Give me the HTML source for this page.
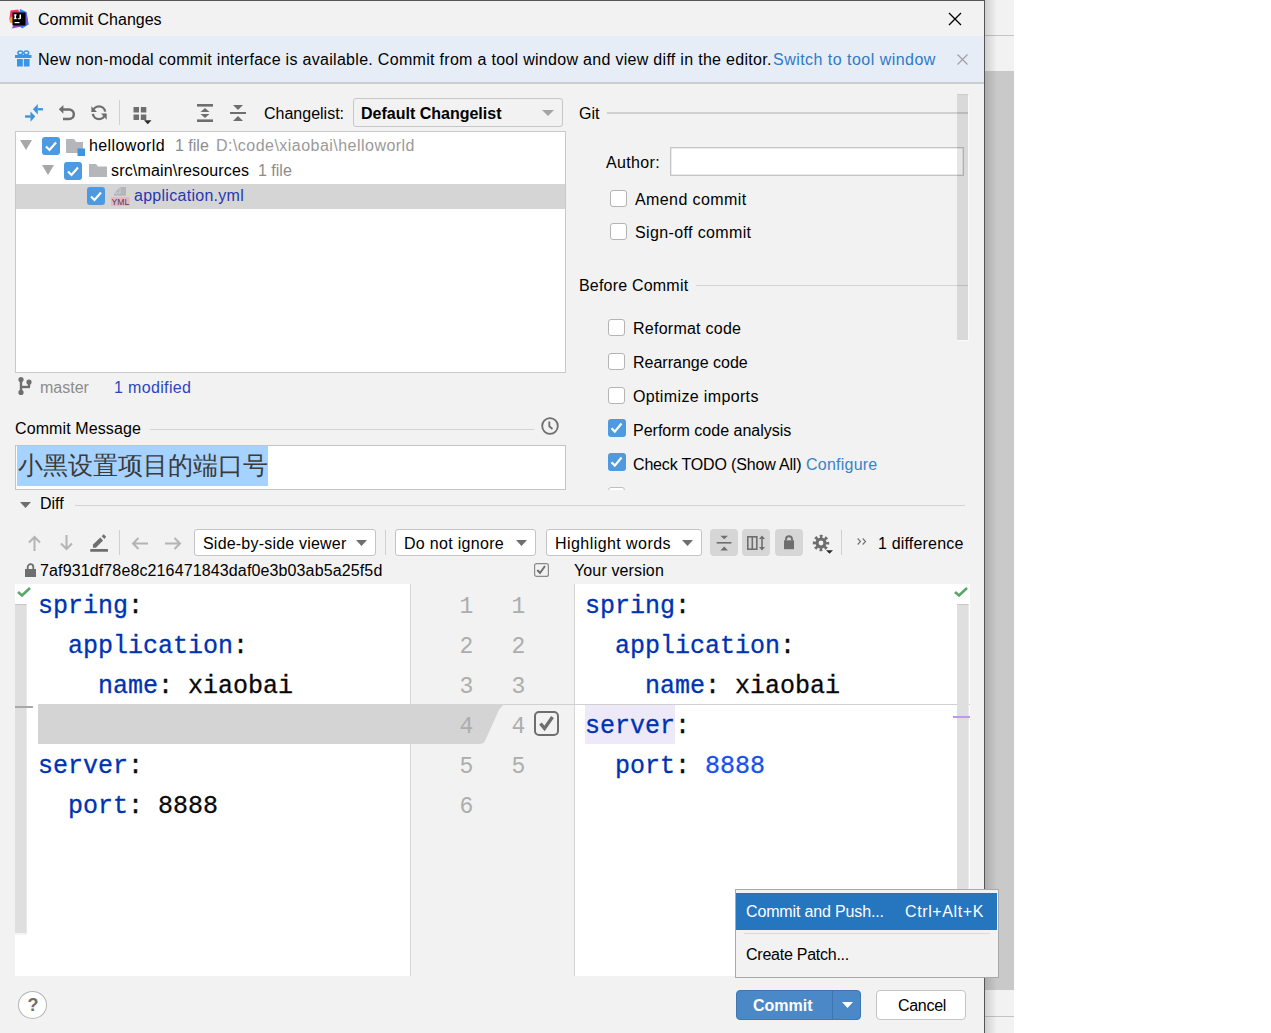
<!DOCTYPE html>
<html><head><meta charset="utf-8">
<style>
*{box-sizing:border-box;margin:0;padding:0}
html,body{width:1271px;height:1033px;overflow:hidden;background:#fff;font-family:"Liberation Sans",sans-serif;color:#000}
.a{position:absolute}
.t{position:absolute;white-space:nowrap;font-size:16px;line-height:20px}
.mono{font-family:"Liberation Mono",monospace}
.cb{position:absolute;width:18px;height:18px;border-radius:3px;background:#4e9ae0}
.cb svg{position:absolute;left:0;top:0}
svg{display:block}
.ucb{position:absolute;width:18px;height:18px;border-radius:3px;background:#fff;border:1px solid #b4b4b4}
.c{position:absolute;white-space:pre;font-family:"Liberation Mono",monospace;font-size:25px;line-height:40px;-webkit-text-stroke:.3px}
.g{position:absolute;white-space:pre;font-family:"Liberation Mono",monospace;font-size:23px;line-height:40px;color:#adadad}
.hr{position:absolute;height:1px;background:#d3d3d3}
</style></head><body>
<!-- outside strip -->
<div class="a" style="left:985px;top:0;width:29px;height:1033px;background:#f2f2f2"></div>
<div class="a" style="left:985px;top:35px;width:29px;height:1px;background:#c4c4c4"></div>
<div class="a" style="left:985px;top:71px;width:29px;height:919px;background:#c9c9c9"></div>
<div class="a" style="left:985px;top:1016px;width:29px;height:1px;background:#c4c4c4"></div>
<div class="a" style="left:985px;top:0;width:12px;height:1033px;background:linear-gradient(90deg,rgba(0,0,0,.14),rgba(0,0,0,0))"></div>

<!-- dialog -->
<div class="a" style="left:0;top:0;width:985px;height:1033px;background:#f2f2f2;border-top:1px solid #555;border-right:1px solid #555"></div>

<!-- title -->
<div class="a" style="left:9px;top:9px;width:20px;height:20px"><svg width="20" height="20" viewBox="0 0 20 20"><path d="M1.5 1.5 L9 0.5 L11 4 L5 13 L0.5 9.5 Z" fill="#ea3568"/><path d="M11 0 L17.5 3 L19.5 15.5 L13 19.5 L8 14 Z" fill="#2e7ef0"/><path d="M17.5 3 L19.5 15.5 L15 17Z" fill="#6a5fe0"/><path d="M0 9 L4.5 7 L4 14.5 L1 13.5Z" fill="#f0923a"/><path d="M2.5 19.5 L6 14 L13 17.5Z" fill="#9345d4"/><rect x="3.5" y="3.5" width="13" height="13" fill="#000"/><g fill="#fff"><rect x="5.5" y="5.5" width="1.5" height="4.5"/><rect x="4.8" y="5.5" width="2.9" height="1"/><rect x="4.8" y="9.2" width="2.9" height="1"/><path d="M10.5 5.5 H12 V9 Q12 10.2 10.5 10.2 H8.8 V9.2 H10.5Z"/><rect x="5.5" y="13" width="5" height="1.2"/></g></svg></div>
<div class="t" style="left:38px;top:10px;font-size:16px">Commit Changes</div>
<div class="a" style="left:948px;top:12px;width:14px;height:14px"><svg width="14" height="14"><path d="M1 1 L13 13 M13 1 L1 13" stroke="#000" stroke-width="1.3"/></svg></div>

<!-- banner -->
<div class="a" style="left:0;top:36px;width:984px;height:46px;background:#e6edf7"></div>
<div class="a" style="left:0;top:82px;width:984px;height:2px;background:#cbcdd0"></div>
<div class="a" style="left:15px;top:50px;width:17px;height:17px"><svg width="17" height="17"><g fill="#3d94e0"><rect x="0" y="5" width="16.5" height="3"/><rect x="2" y="9" width="5.8" height="7.5"/><rect x="8.8" y="9" width="5.8" height="7.5"/></g><g stroke="#3d94e0" stroke-width="1.5" fill="none"><ellipse cx="5.3" cy="2.8" rx="2.4" ry="1.9"/><ellipse cx="11.3" cy="2.8" rx="2.4" ry="1.9"/></g></svg></div>
<div class="t" style="left:38px;top:50px;font-size:16px;letter-spacing:.3px">New non-modal commit interface is available. Commit from a tool window and view diff in the editor.</div>
<div class="t" style="left:773px;top:50px;font-size:16px;color:#2e7bc7;letter-spacing:.47px">Switch to tool window</div>
<div class="a" style="left:957px;top:54px;width:11px;height:11px"><svg width="11" height="11"><path d="M.5 .5 L10.5 10.5 M10.5 .5 L.5 10.5" stroke="#a0a0a0" stroke-width="1.2"/></svg></div>


<!-- toolbar -->
<div class="a" style="left:25px;top:104px;width:18px;height:18px"><svg width="18" height="18" viewBox="0 0 18 18"><g fill="#3d94e0"><path d="M7.9 5.2 L12.8 0 L12.8 10.4Z"/><rect x="12.5" y="4.1" width="5.5" height="2.3"/><path d="M10.3 12.6 L5.5 7.6 L5.5 17.8Z"/><rect x="0" y="11.3" width="5.8" height="2.4"/></g></svg></div>
<div class="a" style="left:58px;top:104px;width:18px;height:18px"><svg width="18" height="18" viewBox="0 0 18 18"><path d="M4.5 5.4 H11 A4.85 4.85 0 0 1 11 15.1 H5" stroke="#6e6e6e" stroke-width="2.5" fill="none"/><path d="M0.8 5.3 L5.4 1 L5.4 9.7Z" fill="#6e6e6e"/></svg></div>
<div class="a" style="left:90px;top:104px;width:18px;height:18px"><svg width="18" height="18" viewBox="0 0 18 18"><g stroke="#6e6e6e" stroke-width="2.4" fill="none"><path d="M2.8 7.6 A6.3 6.3 0 0 1 15.2 7.6"/><path d="M15.2 9.9 A6.3 6.3 0 0 1 2.8 9.9"/></g><g fill="#6e6e6e"><path d="M1.4 2.2 V7.9 H7Z"/><path d="M16.7 9.6 V15.7 L11 9.6Z"/></g></svg></div>
<div class="a" style="left:119px;top:100px;width:1px;height:25px;background:#d0d0d0"></div>
<div class="a" style="left:133px;top:107px;width:19px;height:18px"><svg width="19" height="18"><g fill="#6e6e6e"><rect x="0.5" y="0" width="5.5" height="5.5"/><rect x="7.8" y="0" width="5.5" height="5.5"/><rect x="0.5" y="7.5" width="5.5" height="5.5"/><rect x="7.8" y="7.5" width="5.5" height="5.5"/></g><path d="M11 13.3 H18.5 L14.75 17.2Z" fill="#2b2b2b"/></svg></div>
<div class="a" style="left:197px;top:104px;width:16px;height:18px"><svg width="16" height="18"><g fill="#6e6e6e"><rect x="0" y="0" width="16" height="2.6"/><rect x="0" y="15.4" width="16" height="2.6"/><path d="M3.5 8 L8 4 L12.5 8Z"/><path d="M3.5 10 L8 14 L12.5 10Z"/></g></svg></div>
<div class="a" style="left:230px;top:105px;width:16px;height:16px"><svg width="16" height="16"><g fill="#6e6e6e"><rect x="0" y="7" width="16" height="2"/><path d="M3 0 H13 L8 5Z"/><path d="M3 16 H13 L8 11Z"/></g></svg></div>
<div class="t" style="left:264px;top:104px">Changelist:</div>
<div class="a" style="left:353px;top:98px;width:210px;height:29px;border:1px solid #c6c6c6;border-radius:3px;background:#f2f2f2"></div>
<div class="t" style="left:361px;top:104px;font-weight:bold">Default Changelist</div>
<div class="a" style="left:542px;top:110px;width:12px;height:6px"><svg width="12" height="6"><path d="M0 0 H12 L6 6Z" fill="#a4a4a4"/></svg></div>

<!-- tree -->
<div class="a" style="left:15px;top:131px;width:551px;height:242px;background:#fff;border:1px solid #c9c9c9"></div>
<div class="a" style="left:16px;top:184px;width:549px;height:25px;background:#d5d5d5"></div>
<div class="a" style="left:20px;top:140px;width:12px;height:10px"><svg width="12" height="10"><path d="M0 0 H12 L6 10Z" fill="#a8a8a8"/></svg></div>
<div class="a" style="left:42px;top:165px;width:12px;height:10px"><svg width="12" height="10"><path d="M0 0 H12 L6 10Z" fill="#a8a8a8"/></svg></div>
<div class="cb" style="left:42px;top:137px;width:18px;height:18px"><svg width="18" height="18"><path d="M4 9.5 L7.5 13 L14 5.5" stroke="#fff" stroke-width="2.2" fill="none"/></svg></div>
<div class="cb" style="left:64px;top:162px;width:18px;height:18px"><svg width="18" height="18"><path d="M4 9.5 L7.5 13 L14 5.5" stroke="#fff" stroke-width="2.2" fill="none"/></svg></div>
<div class="cb" style="left:87px;top:187px;width:18px;height:18px"><svg width="18" height="18"><path d="M4 9.5 L7.5 13 L14 5.5" stroke="#fff" stroke-width="2.2" fill="none"/></svg></div>
<div class="a" style="left:66px;top:139px;width:20px;height:17px"><svg width="20" height="17"><path d="M0 0 H8 L10 3 H17 V14 H0Z" fill="#b4b6b9"/><rect x="11.5" y="9.5" width="7.5" height="7.5" fill="#3d94e0"/></svg></div>
<div class="a" style="left:89px;top:164px;width:18px;height:13px"><svg width="18" height="13"><path d="M0 0 H7 L9 2.5 H18 V13 H0Z" fill="#b4b6b9"/></svg></div>
<div class="a" style="left:111px;top:187px;width:20px;height:19px"><svg width="20" height="19"><path d="M3 8.7 V6.5 L9 0 H15 V8.7Z" fill="#b4b6b9"/><path d="M9 0 V6 H3.5" stroke="#d4d4d4" stroke-width=".8" fill="none"/><rect x="0" y="10" width="18.7" height="8.8" fill="#e8b4c8"/><text x="0.6" y="18.2" font-size="9.3" font-family="Liberation Sans" fill="#454545" textLength="17.6" lengthAdjust="spacingAndGlyphs">YML</text></svg></div>
<div class="t" style="left:89px;top:136px;letter-spacing:.4px">helloworld</div>
<div class="t" style="left:175px;top:136px;color:#8c8c8c">1 file</div>
<div class="t" style="left:216px;top:136px;color:#9a9a9a;letter-spacing:.47px">D:\code\xiaobai\helloworld</div>
<div class="t" style="left:111px;top:161px;letter-spacing:.17px">src\main\resources</div>
<div class="t" style="left:258px;top:161px;color:#8c8c8c">1 file</div>
<div class="t" style="left:134px;top:186px;color:#2837b0;letter-spacing:.28px">application.yml</div>

<!-- status -->
<div class="a" style="left:18px;top:377px;width:14px;height:18px"><svg width="14" height="18"><g fill="#6e6e6e"><circle cx="3" cy="2.6" r="2.6"/><circle cx="3" cy="15.4" r="2.6"/><circle cx="11" cy="5" r="2.6"/><rect x="1.8" y="2" width="2.4" height="14"/><rect x="9.8" y="5" width="2.4" height="5"/><rect x="3" y="8.8" width="9" height="2.4"/></g></svg></div>
<div class="t" style="left:40px;top:378px;color:#8c8c8c">master</div>
<div class="t" style="left:114px;top:378px;color:#2a46c0;letter-spacing:.35px">1 modified</div>

<!-- commit message -->
<div class="t" style="left:15px;top:419px;letter-spacing:.1px">Commit Message</div>
<div class="hr" style="left:150px;top:429px;width:384px"></div>
<div class="a" style="left:541px;top:417px;width:18px;height:18px"><svg width="18" height="18"><circle cx="9" cy="9" r="7.8" stroke="#6e6e6e" stroke-width="1.8" fill="none"/><path d="M8.3 4.5 V9.3 L11.5 12" stroke="#6e6e6e" stroke-width="1.8" fill="none"/></svg></div>
<div class="a" style="left:15px;top:445px;width:551px;height:45px;background:#fff;border:1px solid #c4c4c4"></div>
<div class="a" style="left:17px;top:446px;width:251px;height:40px;background:#a6d2ff"></div>
<div class="t" style="left:18px;top:451px;font-family:'Liberation Serif',serif;font-size:24.7px;line-height:30px;color:#3a3a3a">小黑设置项目的端口号</div>

<!-- diff header -->
<div class="a" style="left:20px;top:502px;width:11px;height:6px"><svg width="11" height="6"><path d="M0 0 H11 L5.5 6Z" fill="#6e6e6e"/></svg></div>
<div class="t" style="left:40px;top:494px">Diff</div>
<div class="hr" style="left:75px;top:505px;width:890px"></div>


<!-- right panel -->
<div class="t" style="left:579px;top:104px">Git</div>
<div class="a" style="left:607px;top:112px;width:362px;height:2px;background:#d0d0d0"></div>
<div class="t" style="left:606px;top:153px;letter-spacing:.35px">Author:</div>
<div class="a" style="left:670px;top:147px;width:294px;height:29px;background:#fff;border:1px solid #c4c4c4;box-shadow:inset 0 0 0 .5px #d8d8d8"></div>
<div class="ucb" style="left:610px;top:190px;width:17px;height:17px"></div>
<div class="t" style="left:635px;top:190px;letter-spacing:.4px">Amend commit</div>
<div class="ucb" style="left:610px;top:223px;width:17px;height:17px"></div>
<div class="t" style="left:635px;top:223px;letter-spacing:.37px">Sign-off commit</div>
<div class="t" style="left:579px;top:276px;letter-spacing:.2px">Before Commit</div>
<div class="hr" style="left:696px;top:285px;width:273px"></div>
<div class="ucb" style="left:608px;top:319px;width:17px;height:17px"></div>
<div class="t" style="left:633px;top:319px;letter-spacing:.25px">Reformat code</div>
<div class="ucb" style="left:608px;top:353px;width:17px;height:17px"></div>
<div class="t" style="left:633px;top:353px">Rearrange code</div>
<div class="ucb" style="left:608px;top:387px;width:17px;height:17px"></div>
<div class="t" style="left:633px;top:387px;letter-spacing:.36px">Optimize imports</div>
<div class="cb" style="left:608px;top:419px"><svg width="17" height="17"><path d="M3.5 9.2 L6.8 12.6 L13.5 4.5" stroke="#fff" stroke-width="2.2" fill="none"/></svg></div>
<div class="t" style="left:633px;top:421px">Perform code analysis</div>
<div class="cb" style="left:608px;top:453px"><svg width="17" height="17"><path d="M3.5 9.2 L6.8 12.6 L13.5 4.5" stroke="#fff" stroke-width="2.2" fill="none"/></svg></div>
<div class="t" style="left:633px;top:455px;letter-spacing:-.17px">Check TODO (Show All)</div>
<div class="t" style="left:806px;top:455px;color:#3b83c7;letter-spacing:.23px">Configure</div>
<div class="a" style="left:608px;top:487px;width:17px;height:3px;overflow:hidden"><div style="width:17px;height:17px;border:1px solid #c0c0c0;border-radius:3px;background:#fff"></div></div>
<div class="a" style="left:957px;top:94px;width:12px;height:247px;background:rgba(0,0,0,.1);border-right:1px solid #fafafa;border-bottom:1px solid #fafafa;border-top:1px solid rgba(0,0,0,.05)"></div>

<!-- diff toolbar -->
<div class="a" style="left:28px;top:535px;width:13px;height:16px"><svg width="13" height="16"><path d="M6.5 16 V2 M1 7.5 L6.5 2 L12 7.5" stroke="#b4b4b4" stroke-width="2" fill="none"/></svg></div>
<div class="a" style="left:60px;top:535px;width:13px;height:16px"><svg width="13" height="16"><path d="M6.5 0 V14 M1 8.5 L6.5 14 L12 8.5" stroke="#b4b4b4" stroke-width="2" fill="none"/></svg></div>
<div class="a" style="left:90px;top:534px;width:18px;height:18px"><svg width="18" height="18"><g fill="#6e6e6e"><path d="M2.9 13.7 L3.05 10.5 L10.3 3.5 L13.05 6.4 L5.9 13.7Z"/><path d="M11.7 2.2 L13.7 0.15 L16.1 2.7 L14.4 4.9Z"/><rect x="0.2" y="15.1" width="17.8" height="2.7" rx=".6"/></g></svg></div>
<div class="a" style="left:119px;top:530px;width:1px;height:25px;background:#d0d0d0"></div>
<div class="a" style="left:131px;top:537px;width:17px;height:13px"><svg width="17" height="13"><path d="M17 6.5 H2 M7.5 1 L2 6.5 L7.5 12" stroke="#b4b4b4" stroke-width="2" fill="none"/></svg></div>
<div class="a" style="left:165px;top:537px;width:17px;height:13px"><svg width="17" height="13"><path d="M0 6.5 H15 M9.5 1 L15 6.5 L9.5 12" stroke="#b4b4b4" stroke-width="2" fill="none"/></svg></div>
<div class="a" style="left:194px;top:529px;width:182px;height:27px;background:#fff;border:1px solid #c4c4c4;border-radius:3px"></div>
<div class="t" style="left:203px;top:534px;letter-spacing:.2px">Side-by-side viewer</div>
<div class="a" style="left:356px;top:540px;width:11px;height:6px"><svg width="11" height="6"><path d="M0 0 H11 L5.5 6Z" fill="#6e6e6e"/></svg></div>
<div class="a" style="left:385px;top:530px;width:1px;height:25px;background:#d0d0d0"></div>
<div class="a" style="left:395px;top:529px;width:141px;height:27px;background:#fff;border:1px solid #c4c4c4;border-radius:3px"></div>
<div class="t" style="left:404px;top:534px;letter-spacing:.3px">Do not ignore</div>
<div class="a" style="left:516px;top:540px;width:11px;height:6px"><svg width="11" height="6"><path d="M0 0 H11 L5.5 6Z" fill="#6e6e6e"/></svg></div>
<div class="a" style="left:546px;top:529px;width:156px;height:27px;background:#fff;border:1px solid #c4c4c4;border-radius:3px"></div>
<div class="t" style="left:555px;top:534px;letter-spacing:.44px">Highlight words</div>
<div class="a" style="left:682px;top:540px;width:11px;height:6px"><svg width="11" height="6"><path d="M0 0 H11 L5.5 6Z" fill="#6e6e6e"/></svg></div>
<div class="a" style="left:710px;top:529px;width:28px;height:27px;background:#d6d6d6;border-radius:4px"></div>
<div class="a" style="left:742px;top:529px;width:28px;height:27px;background:#d6d6d6;border-radius:4px"></div>
<div class="a" style="left:775px;top:529px;width:28px;height:27px;background:#d6d6d6;border-radius:4px"></div>
<div class="a" style="left:716px;top:535px;width:16px;height:16px"><svg width="16" height="16"><g fill="#6e6e6e"><rect x="0.7" y="7" width="14.7" height="1.6"/><path d="M4.4 0.8 H12 L8.2 4.3Z"/><path d="M4.4 15.6 H12 L8.2 11.6Z"/></g></svg></div>
<div class="a" style="left:747px;top:535px;width:19px;height:16px"><svg width="19" height="16"><g fill="none" stroke="#6e6e6e" stroke-width="1.6"><rect x=".8" y="1.8" width="9" height="12.4"/><path d="M5.3 1.8 V14.2"/><path d="M15 2 V14"/></g><path d="M12 4 L15 .5 L18 4Z M12 12 L15 15.5 L18 12Z" fill="#6e6e6e"/></svg></div>
<div class="a" style="left:784px;top:535px;width:10px;height:15px"><svg width="10" height="15"><path d="M2 5.5 V4.2 A3 3 0 0 1 8 4.2 V5.5" stroke="#6e6e6e" stroke-width="1.9" fill="none"/><rect x="0" y="5.3" width="10" height="8.9" fill="#6e6e6e"/></svg></div>
<div class="a" style="left:812px;top:534px;width:22px;height:21px"><svg width="22" height="21"><circle cx="9" cy="9" r="5.6" fill="#6e6e6e"/><circle cx="9" cy="9" r="6.6" stroke="#6e6e6e" stroke-width="3.2" stroke-dasharray="2.7 2.48" stroke-dashoffset="1.35" fill="none"/><circle cx="9" cy="9" r="2.4" fill="#f2f2f2"/><path d="M14 16.3 H21 L17.5 19.8Z" fill="#2b2b2b"/></svg></div>
<div class="a" style="left:841px;top:530px;width:1px;height:25px;background:#d0d0d0"></div>
<div class="a" style="left:857px;top:538px;width:10px;height:7px"><svg width="10" height="7"><path d="M.7 .5 L3.5 3.5 L.7 6.5 M5.7 .5 L8.5 3.5 L5.7 6.5" stroke="#6e6e6e" stroke-width="1.1" fill="none"/></svg></div>
<div class="t" style="left:878px;top:534px;letter-spacing:.18px">1 difference</div>

<!-- hash row -->
<div class="a" style="left:25px;top:563px;width:11px;height:14px"><svg width="11" height="14"><path d="M2.7 6 V4 A2.8 2.8 0 0 1 8.3 4 V6" stroke="#6e6e6e" stroke-width="1.8" fill="none"/><rect x="0" y="6" width="11" height="8" fill="#6e6e6e"/></svg></div>
<div class="t" style="left:40px;top:561px;letter-spacing:.13px">7af931df78e8c216471843daf0e3b03ab5a25f5d</div>
<div class="a" style="left:534px;top:563px;width:15px;height:14px"><svg width="15" height="14"><rect x=".6" y=".6" width="13.8" height="12.8" rx="2" stroke="#8a8a8a" stroke-width="1.2" fill="none"/><path d="M3.3 7 L6 10 L11 3" stroke="#6e6e6e" stroke-width="2" fill="none"/></svg></div>
<div class="t" style="left:574px;top:561px;letter-spacing:.13px">Your version</div>


<!-- editors -->
<div class="a" style="left:15px;top:584px;width:395px;height:392px;background:#fff"></div>
<div class="a" style="left:410px;top:584px;width:1px;height:392px;background:#d6d6d6"></div>
<div class="a" style="left:574px;top:584px;width:1px;height:392px;background:#d6d6d6"></div>
<div class="a" style="left:575px;top:584px;width:395px;height:392px;background:#fff"></div>
<div class="a" style="left:38px;top:704px;width:372px;height:40px;background:#d4d4d4"></div>
<div class="a" style="left:410px;top:704px;width:100px;height:40px"><svg width="100" height="40"><path d="M0 0 H95 C92 2,90 4,88 8 L75 37 C74 39,72 40,69 40 H0Z" fill="#d4d4d4"/><path d="M94 .5 H100" stroke="#d0d0d0" stroke-width="1"/></svg></div>
<div class="a" style="left:504px;top:704px;width:466px;height:1px;background:#d0d0d0"></div>
<div class="a" style="left:585px;top:705px;width:90px;height:39px;background:#ede9f9"></div>
<div class="a" style="left:15px;top:604px;width:12px;height:331px;background:#dfdfdf;border-top:1px solid #c9c9c9;border-right:1px solid #e8e8e8;border-bottom:2px solid #f4f4f4"></div>
<div class="a" style="left:957px;top:604px;width:12px;height:372px;background:#dfdfdf;border-top:1px solid #c9c9c9;border-right:1px solid #e8e8e8"></div>
<div class="a" style="left:15px;top:706px;width:18px;height:2px;background:#a9a9a9"></div>
<div class="a" style="left:953px;top:716px;width:17px;height:2px;background:#b99bf0"></div>
<div class="a" style="left:17px;top:587px;width:14px;height:10px"><svg width="14" height="10"><path d="M1 5 L5 8.5 L13 1" stroke="#59a869" stroke-width="2.6" fill="none"/></svg></div>
<div class="a" style="left:954px;top:587px;width:14px;height:10px"><svg width="14" height="10"><path d="M1 5 L5 8.5 L13 1" stroke="#59a869" stroke-width="2.6" fill="none"/></svg></div>
<div class="c" style="left:38px;top:587px"><span style="color:#0033b3">spring</span><span style="color:#080808">:</span></div>
<div class="c" style="left:38px;top:627px"><span style="color:#0033b3">  application</span><span style="color:#080808">:</span></div>
<div class="c" style="left:38px;top:667px"><span style="color:#0033b3">    name</span><span style="color:#080808">: xiaobai</span></div>
<div class="c" style="left:38px;top:747px"><span style="color:#0033b3">server</span><span style="color:#080808">:</span></div>
<div class="c" style="left:38px;top:787px"><span style="color:#0033b3">  port</span><span style="color:#080808">: 8888</span></div>
<div class="c" style="left:585px;top:587px"><span style="color:#0033b3">spring</span><span style="color:#080808">:</span></div>
<div class="c" style="left:585px;top:627px"><span style="color:#0033b3">  application</span><span style="color:#080808">:</span></div>
<div class="c" style="left:585px;top:667px"><span style="color:#0033b3">    name</span><span style="color:#080808">: xiaobai</span></div>
<div class="c" style="left:585px;top:707px"><span style="color:#0033b3">server</span><span style="color:#080808">:</span></div>
<div class="c" style="left:585px;top:747px"><span style="color:#0033b3">  port</span><span style="color:#080808">: </span><span style="color:#1750eb">8888</span></div>
<div class="g" style="left:459.5px;top:587px">1</div>
<div class="g" style="left:459.5px;top:627px">2</div>
<div class="g" style="left:459.5px;top:667px">3</div>
<div class="g" style="left:459.5px;top:707px">4</div>
<div class="g" style="left:459.5px;top:747px">5</div>
<div class="g" style="left:459.5px;top:787px">6</div>
<div class="g" style="left:511.5px;top:587px">1</div>
<div class="g" style="left:511.5px;top:627px">2</div>
<div class="g" style="left:511.5px;top:667px">3</div>
<div class="g" style="left:511.5px;top:707px">4</div>
<div class="g" style="left:511.5px;top:747px">5</div>
<div class="a" style="left:534px;top:711px;width:25px;height:25px"><svg width="25" height="25"><rect x="1" y="1" width="23" height="23" rx="4" stroke="#6e6e6e" stroke-width="2" fill="none"/><path d="M6.5 12.5 L10.5 17.5 L18.5 6" stroke="#6e6e6e" stroke-width="3.4" fill="none"/></svg></div>

<!-- bottom -->
<div class="a" style="left:18px;top:991px;width:29px;height:28px;border:1px solid #b5b5b5;border-radius:50%;background:#fff"></div>
<div class="t" style="left:27.5px;top:995px;font-weight:bold;font-size:18px;color:#6e6e6e">?</div>
<div class="a" style="left:736px;top:990px;width:125px;height:30px;background:#4a88c7;border:1px solid #3f76b0;border-radius:4px"></div>
<div class="a" style="left:832px;top:991px;width:1px;height:28px;background:#3f74ad"></div>
<div class="t" style="left:753px;top:996px;font-weight:bold;color:#fff">Commit</div>
<div class="a" style="left:842px;top:1002px;width:11px;height:6px"><svg width="11" height="6"><path d="M0 0 H11 L5.5 6Z" fill="#fff"/></svg></div>
<div class="a" style="left:876px;top:990px;width:90px;height:30px;background:#fff;border:1px solid #c4c4c4;border-radius:4px"></div>
<div class="t" style="left:898px;top:996px;letter-spacing:-.3px">Cancel</div>

<!-- popup -->
<div class="a" style="left:735px;top:889px;width:264px;height:89px;background:#f2f2f2;border:1px solid #a9a9a9"></div>
<div class="a" style="left:736px;top:893px;width:261px;height:37px;background:#2675bf"></div>
<div class="a" style="left:744px;top:933px;width:246px;height:1px;background:#d9d9d9"></div>
<div class="t" style="left:746px;top:902px;color:#fff;letter-spacing:-.15px">Commit and Push...</div>
<div class="t" style="left:905px;top:902px;color:#fff;letter-spacing:.6px">Ctrl+Alt+K</div>
<div class="t" style="left:746px;top:945px;letter-spacing:-.25px">Create Patch...</div>

</body></html>
